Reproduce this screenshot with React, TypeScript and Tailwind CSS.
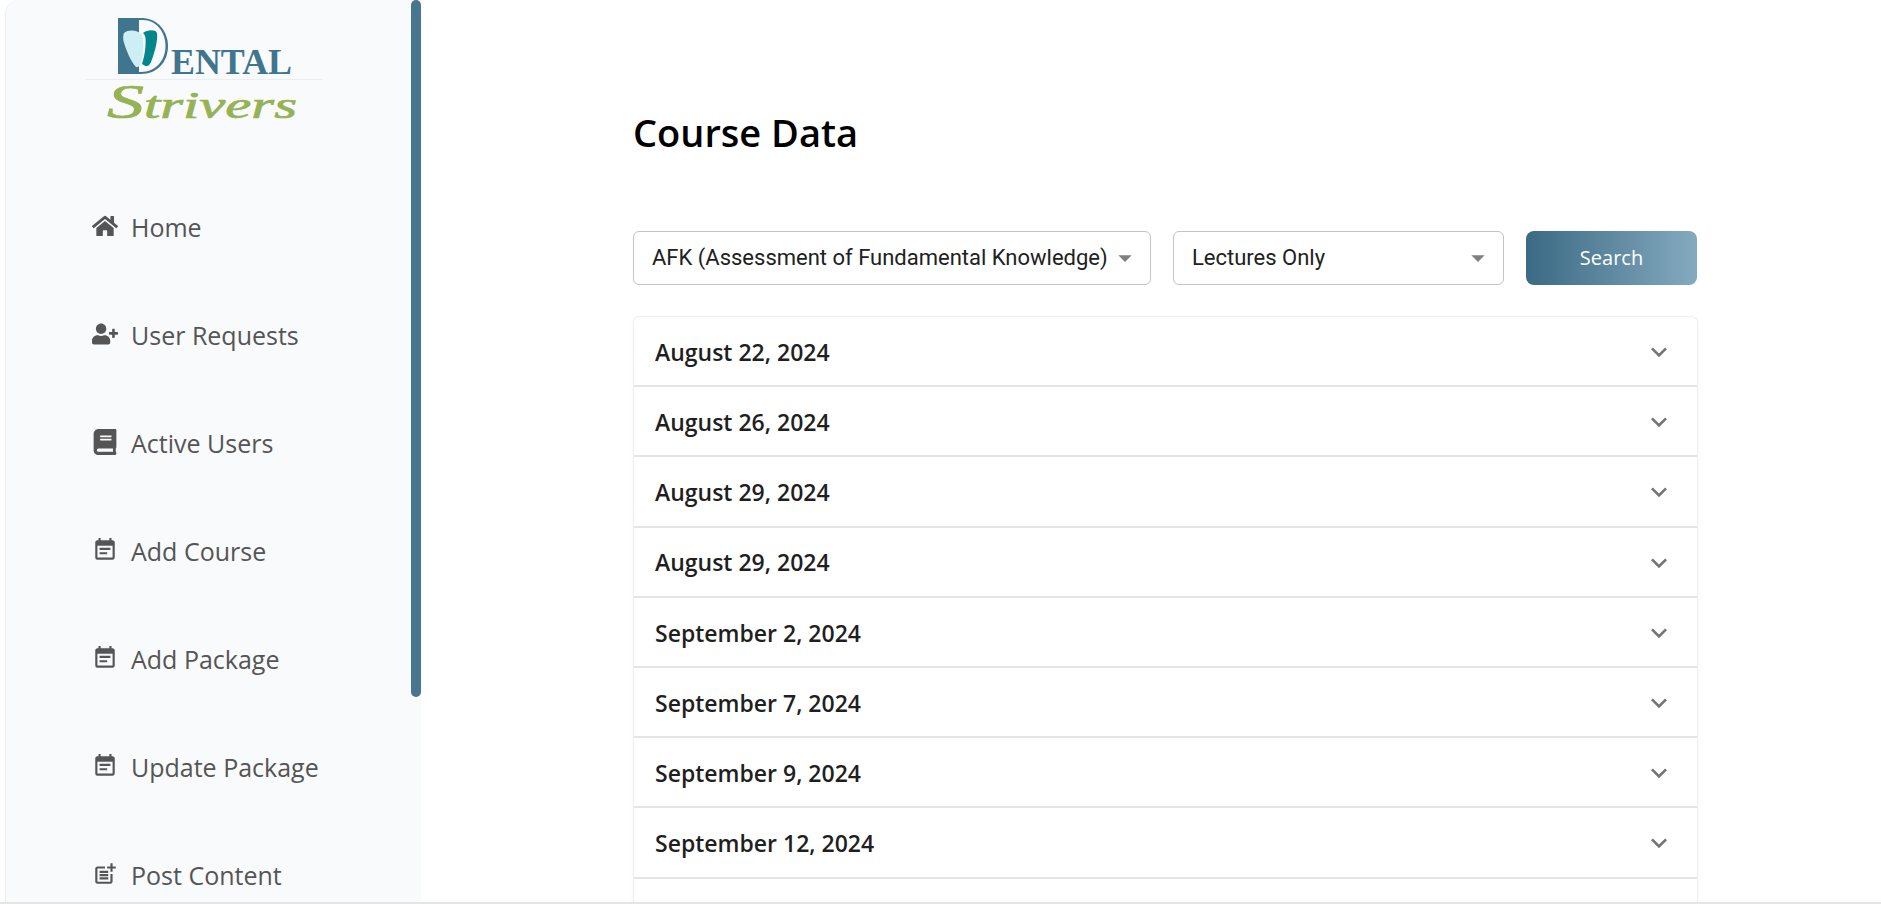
import type { ReactNode } from "react";
import { FaBook, FaHome, FaUserPlus } from "react-icons/fa";
import { MdArrowDropDown, MdEventNote, MdExpandMore, MdOutlinePostAdd } from "react-icons/md";

const navItems: { label: string; icon: ReactNode }[] = [
  { label: "Home", icon: <FaHome className="h-[26px] w-[26px]" /> },
  { label: "User Requests", icon: <FaUserPlus className="h-[26px] w-[26px]" /> },
  { label: "Active Users", icon: <FaBook className="h-[26px] w-[26px]" /> },
  { label: "Add Course", icon: <MdEventNote className="h-[26px] w-[26px]" /> },
  { label: "Add Package", icon: <MdEventNote className="h-[26px] w-[26px]" /> },
  { label: "Update Package", icon: <MdEventNote className="h-[26px] w-[26px]" /> },
  { label: "Post Content", icon: <MdOutlinePostAdd className="h-[26px] w-[26px]" /> },
];

const dates = [
  "August 22, 2024",
  "August 26, 2024",
  "August 29, 2024",
  "August 29, 2024",
  "September 2, 2024",
  "September 7, 2024",
  "September 9, 2024",
  "September 12, 2024",
];

function Logo() {
  return (
    <svg viewBox="85 17 238 105" className="h-[105px] w-[238px] overflow-visible">
      <path d="M118 18H142C158 18 168 32 168 46C168 62 157 74 141 74H118Z" fill="#40758f" />
      <path d="M139 20H143C156 20 165.500 32 165.500 46C165.500 61 155 72 141 72H139Z" fill="#f8fafc" />
      <path d="M143 33C147 30 155 29 157 33C158 40 155 52 151 62C149 67 146 67 142 64C145 55 146 45 145.500 38C145 35 144 34 143 33Z" fill="#03868c" />
      <path d="M124 33C128 29 138 30 141 34C144 38 144 50 142 58C141 64 139 68 136 67C131 62 126 50 123.500 41C123 38 123 35 124 33Z" fill="#cdeef4" />
      <text x="171" y="74" fontFamily="'Liberation Serif', serif" fontWeight="700" fontSize="35" textLength="121" lengthAdjust="spacingAndGlyphs" fill="#40758f">
        ENTAL
      </text>
      <line x1="85" y1="79.500" x2="323" y2="79.500" stroke="#e8eff2" strokeWidth="1" />
      <text x="107" y="118" fontFamily="'Liberation Serif', serif" fontStyle="italic" fontWeight="400" fontSize="38" textLength="190" lengthAdjust="spacingAndGlyphs" fill="#97b255" stroke="#97b255" strokeWidth="0.7">
        <tspan fontSize="48">S</tspan>trivers
      </text>
    </svg>
  );
}

function Sidebar() {
  return (
    <aside className="flex h-full w-[416px] shrink-0 rounded-tl-[14px] border-l border-[#eeeeee] bg-[#f9fafc]">
      <div className="min-w-0 flex-1">
        <div className="pl-[79px] pt-[17px]">
          <Logo />
        </div>
        <nav className="mt-[52px] flex flex-col">
          {navItems.map((item) => (
            <div key={item.label} className="flex h-[108px] items-center pl-[86px] text-[25px] text-[#555555]">
              <span className="flex w-[39px] -translate-y-[2px] items-center">{item.icon}</span>
              {item.label}
            </div>
          ))}
        </nav>
      </div>
      <div className="h-[697px] w-[10px] shrink-0 rounded-full bg-[#48758f]" />
    </aside>
  );
}

function SelectBox({ label, className }: { label: string; className: string }) {
  return (
    <div className={`flex h-[54px] items-center justify-between rounded-[6px] border border-[#c4c4c4] pl-[18px] pr-[9px] font-['Roboto',sans-serif] text-[22px] text-[#212121] ${className}`}>
      <span className="-translate-y-[1px] whitespace-nowrap">{label}</span>
      <MdArrowDropDown className="h-[32px] w-[32px] shrink-0 text-[#808080]" />
    </div>
  );
}

function DateRow({ date }: { date: string }) {
  return (
    <div className="flex h-[70.2px] items-center justify-between border-b-2 border-[#e4e4e4] pl-[21px] pr-[22px] pt-[2px]">
      <span className="text-[23px] font-semibold text-[#1f1f1f]">{date}</span>
      <MdExpandMore className="h-[32px] w-[32px] text-[#757575]" />
    </div>
  );
}

export default function App() {
  return (
    <div className="flex h-[904px] overflow-hidden border-b-2 border-[#e4e6e6] bg-white pl-[5px] font-['Open_Sans',sans-serif]">
      <Sidebar />
      <main className="ml-[212px] w-[1065px] shrink-0">
        <h1 className="mt-[107px] text-[38px] font-semibold leading-[50px] text-black">Course Data</h1>
        <div className="mt-[74px] flex items-center">
          <SelectBox label="AFK (Assessment of Fundamental Knowledge)" className="w-[518px]" />
          <SelectBox label="Lectures Only" className="ml-[22px] w-[331px]" />
          <button className="ml-[22px] h-[54px] w-[171px] rounded-[8px] bg-gradient-to-r from-[#3b6a84] to-[#84aabf] text-[20px] text-white">
            Search
          </button>
        </div>
        <div className="mt-[31px] rounded-t-[6px] border-x border-t border-[#f0f0f0] shadow-[0_1px_3px_rgba(0,0,0,0.06)]">
          {dates.map((date, index) => (
            <DateRow key={index} date={date} />
          ))}
          <div className="h-[70px]" />
        </div>
      </main>
    </div>
  );
}
